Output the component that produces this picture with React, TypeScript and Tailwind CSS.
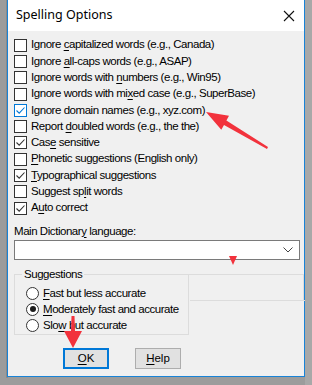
import React from "react";

const U = ({ c }: { c: string }) => <span className="underline underline-offset-[2px] decoration-[1px]">{c}</span>;

function Check({ checked, focus }: { checked?: boolean; focus?: boolean }) {
  return (
    <div
      className={
        "w-[13px] h-[13px] shrink-0 bg-white border flex items-center justify-center " +
        (focus ? "border-[#0078d7]" : "border-[#333333]")
      }
    >
      {checked && (
        <svg width="11" height="11" viewBox="0 0 11 11">
          <path d="M1.5 5.5 L4.2 8.2 L9.5 2.5" fill="none" stroke={focus ? "#0078d7" : "#333333"} strokeWidth="1.1" />
        </svg>
      )}
    </div>
  );
}

function Radio({ checked }: { checked?: boolean }) {
  return (
    <div className="w-[13px] h-[13px] shrink-0 rounded-full bg-white border border-[#333333] flex items-center justify-center">
      {checked && <div className="w-[6px] h-[6px] rounded-full bg-[#1a1a1a]" />}
    </div>
  );
}

const rows: { el: React.ReactNode; checked?: boolean; focus?: boolean }[] = [
  { el: <>Ignore <U c="c" />apitalized words (e.g., Canada)</> },
  { el: <>Ignore <U c="a" />ll-caps words (e.g., ASAP)</> },
  { el: <>Ignore words with <U c="n" />umbers (e.g., Win95)</> },
  { el: <>Ignore words with mi<U c="x" />ed case (e.g., SuperBase)</> },
  { el: <>Ignore domain names (e.g., xyz.com)</>, checked: true, focus: true },
  { el: <>Report <U c="d" />oubled words (e.g., the the)</> },
  { el: <>Cas<U c="e" /> sensitive</>, checked: true },
  { el: <><U c="P" />honetic suggestions (English only)</> },
  { el: <><U c="T" />ypographical suggestions</>, checked: true },
  { el: <>Suggest sp<U c="l" />it words</> },
  { el: <>A<U c="u" />to correct</>, checked: true },
];

export default function App() {
  return (
    <div className="w-[312px] h-[385px] bg-[#9c9c9c] relative overflow-hidden" style={{ fontFamily: '"Liberation Sans", Arial, sans-serif' }}>
      <div className="absolute left-[6px] top-0 w-[2px] h-[378px] bg-[#8a8a8a]" />
      <div className="absolute right-0 top-0 w-[7px] h-[385px] bg-[#a8a8a8]" />
      <div className="ml-[7px] w-[298px] h-[377px] border-l border-r border-b border-[#1883d7] bg-[#f0f0f0] flex flex-col relative">
        {/* title bar */}
        <div className="h-[31px] bg-white flex items-center justify-between pl-[8px] pr-[8px] shrink-0">
          <span className="text-[12.5px] text-black" style={{ fontFamily: '"Noto Sans", "Open Sans", sans-serif' }}>Spelling Options</span>
          <svg width="12" height="12" viewBox="0 0 12 12" className="mr-[1px]">
            <path d="M1 1 L11 11 M11 1 L1 11" stroke="#111" strokeWidth="1.1" />
          </svg>
        </div>
        {/* checkboxes */}
        <div className="flex flex-col pt-[6px] pl-[6px] text-[11.5px] tracking-[-0.45px] text-black leading-none">
          {rows.map((r, i) => (
            <div key={i} className="h-[16.3px] flex items-center gap-[4px] whitespace-nowrap">
              <Check checked={r.checked} focus={r.focus} />
              <span>{r.el}</span>
            </div>
          ))}
        </div>
        {/* dictionary */}
        <div className="pl-[6px] pr-[6px] mt-[8px] text-[11.5px] tracking-[-0.45px] text-black leading-none">
          <div className="h-[14px] flex items-center"><span>Main Dictionar<U c="y" /> language:</span></div>
          <div className="mt-[2px] h-[20px] w-[286px] bg-white border border-[#7a7a7a] flex items-center justify-end pr-[6px]">
            <svg width="10" height="6" viewBox="0 0 10 6">
              <path d="M0.5 0.5 L5 5 L9.5 0.5" fill="none" stroke="#444" strokeWidth="1" />
            </svg>
          </div>
        </div>
        {/* suggestions group */}
        <div className="relative mt-[14px] ml-[6px] w-[175px] h-[61px] border-l border-b border-r border-[#dcdcdc] text-[11.5px] tracking-[-0.45px] text-black leading-none whitespace-nowrap">
          <div className="absolute left-0 top-0 w-[290px] h-[26px] border-t border-r border-[#dcdcdc] -ml-px" />
          <div className="absolute left-[175px] top-[26px] w-[115px] border-t border-[#dcdcdc]" />
          <div className="absolute left-[7px] -top-[7px] px-[2px] bg-[#f0f0f0] h-[14px] flex items-center"><span>Suggestions</span></div>
          <div className="flex flex-col pt-[11px] pl-[11px]">
            <div className="h-[16px] flex items-center gap-[4px]"><Radio /><span><U c="F" />ast but less accurate</span></div>
            <div className="h-[16px] flex items-center gap-[4px]"><Radio checked /><span><U c="M" />oderately fast and accurate</span></div>
            <div className="h-[16px] flex items-center gap-[4px]"><Radio /><span>Slo<U c="w" /> but accurate</span></div>
          </div>
        </div>
        {/* buttons */}
        <div className="flex mt-[13px] pl-[55px] gap-[26px] text-[11.5px] text-black leading-none">
          <div className="w-[46px] h-[21px] border-2 border-[#0078d7] bg-[#e1e1e1] flex items-center justify-center"><span><U c="O" />K</span></div>
          <div className="w-[46px] h-[21px] border border-[#adadad] bg-[#e1e1e1] flex items-center justify-center"><span><U c="H" />elp</span></div>
        </div>
      </div>
      {/* red annotation arrows */}
      <svg className="absolute left-0 top-0 pointer-events-none" width="312" height="385" viewBox="0 0 312 385">
        <polygon fill="#f2323c" points="206,112 229,115.8 226.4,120.6 268,147 267,149 224,125 221.3,129.8" />
        <polygon fill="#f2323c" points="229,256 237,256 233,265" />
        <polygon fill="#f2323c" points="71.5,316 74.5,316 75,331 82,331 73,348 64,331 71,331" />
      </svg>
    </div>
  );
}
